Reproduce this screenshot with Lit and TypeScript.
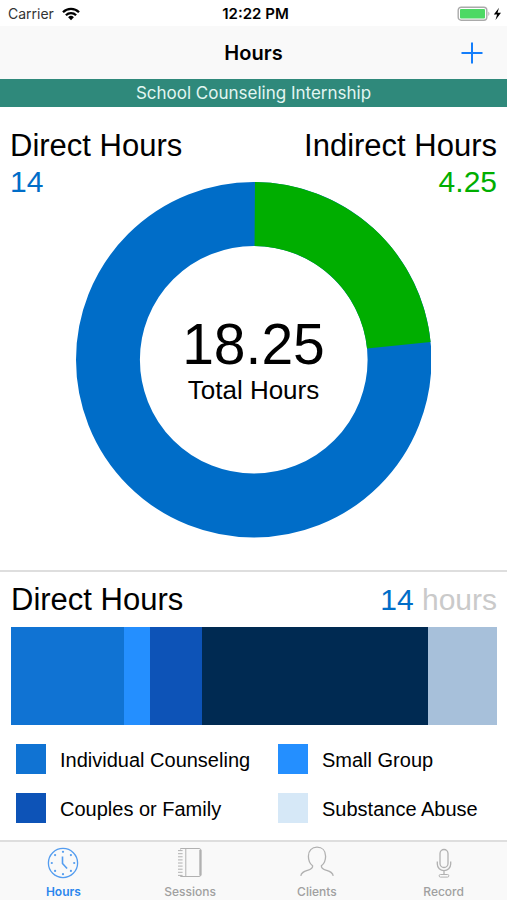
import { LitElement, html, css, svg } from "lit";
import { customElement, state } from "lit/decorators.js";
import { classMap } from "lit/directives/class-map.js";
import { styleMap } from "lit/directives/style-map.js";

const DIRECT = 14;
const INDIRECT = 4.25;

const SEGMENTS = [
  { hours: 3.25, color: "#1073d3" },
  { hours: 0.75, color: "#248fff" },
  { hours: 1.5, color: "#0d53b7" },
  { hours: 6.5, color: "#002a52" },
  { hours: 2, color: "#a7c0da" },
];

const LEGEND = [
  { label: "Individual Counseling", color: "#1073d3" },
  { label: "Small Group", color: "#248fff" },
  { label: "Couples or Family", color: "#0d53b7" },
  { label: "Substance Abuse", color: "#d6e8f7" },
];

const clockDots = Array.from({ length: 8 }, (_, i) => {
  const a = (i * Math.PI) / 4;
  return svg`<circle cx=${17 + 11.2 * Math.sin(a)} cy=${17 - 11.2 * Math.cos(a)} r="1.1" fill="currentColor" stroke="none"></circle>`;
});

const spiral = Array.from(
  { length: 9 },
  (_, i) => svg`<path d="M5 ${4.6 + i * 3.1}h4.6"></path>`
);

const TABS = [
  {
    name: "Hours",
    icon: svg`<circle cx="17" cy="17" r="14.6" stroke-width="1.3"></circle>${clockDots}<path d="M16.5 10.5v7l4.6 5" stroke-width="1.6"></path>`,
  },
  {
    name: "Sessions",
    icon: svg`<path d="M7.5 3.5V2.5H26a2 2 0 0 1 2 2v24a2 2 0 0 1-2 2H7.5v-1M12.8 2.5v28"></path><path d="M27.3 4v25.5" stroke-width="2"></path>${spiral}`,
  },
  {
    name: "Clients",
    icon: svg`<path d="M.8 29.8C1.2 26.4 4 25.5 7.5 24.3 11 23.2 13 22.2 12.6 19.8 9.8 17.6 8.4 14 8.4 10.2 8.4 4.6 11.8 1.2 17 1.2s8.6 3.4 8.6 9c0 3.8-1.4 7.4-4.2 9.6-.4 2.4 1.6 3.4 5.1 4.5 3.5 1.2 6.3 2.1 6.7 5.5" stroke-width="1.3"></path>`,
  },
  {
    name: "Record",
    icon: svg`<rect x="13" y="3.5" width="8" height="18" rx="4" stroke-width="1.3"></rect><path d="M10.3 15.5v2.5a6.7 6.7 0 0 0 13.4 0v-2.5M17 24.7v3.8" stroke-width="1.3"></path><rect x="12.2" y="28.5" width="9.6" height="2.6" rx="1.2"></rect>`,
  },
];

@customElement("app-root")
export class AppRoot extends LitElement {
  @state() private tab = "Hours";

  static styles = css`
    :host {
      display: flex;
      flex-direction: column;
      min-height: 100vh;
      background: #fff;
      color: #000;
      font-family: "Liberation Sans", Arial, sans-serif;
    }
    * {
      box-sizing: border-box;
    }
    h1, h2, p, ul {
      margin: 0;
      padding: 0;
      font-weight: 400;
    }
    h2 {
      font-size: 31px;
    }
    button {
      border: 0;
      padding: 0;
      background: none;
      cursor: pointer;
      font-family: inherit;
    }
    svg {
      display: block;
    }
    .three {
      display: grid;
      grid-template-columns: 1fr auto 1fr;
      align-items: center;
      font-family: Inter, "Open Sans", sans-serif;
    }
    .status {
      height: 26px;
      padding: 2px 4px 0 8px;
      font-size: 14px;
      line-height: 20px;
    }
    .carrier {
      display: flex;
      align-items: center;
      gap: 8px;
      color: #333;
    }
    .clock {
      font-size: 15px;
      font-weight: 600;
    }
    .power {
      justify-self: end;
    }
    .nav {
      height: 53px;
      padding: 0 20px;
      background: #f9f9f9;
    }
    .nav .title {
      grid-column: 2;
      font-size: 20px;
      line-height: 24px;
      font-weight: 600;
    }
    .add {
      justify-self: end;
      color: #147efb;
      padding: 4px;
    }
    .site {
      height: 28px;
      background: #2f897b;
      color: #e2f6f2;
      font-family: Inter, "Open Sans", sans-serif;
      font-size: 17px;
      line-height: 28px;
      text-align: center;
    }
    .overview {
      flex: 1;
      padding: 21px 10px 0;
      border-bottom: 2px solid #dedede;
    }
    .totals,
    .heading {
      display: flex;
      justify-content: space-between;
      font-size: 30px;
      line-height: 36px;
    }
    .totals > :last-child {
      text-align: right;
    }
    .blue {
      color: #006dc8;
    }
    .green {
      color: #00ae00;
    }
    .gray {
      color: #cacaca;
    }
    .chart {
      display: grid;
      place-items: center;
      width: 73%;
      margin: -18px auto 32px;
    }
    .chart > * {
      grid-area: 1 / 1;
    }
    .ring {
      width: 100%;
    }
    .center {
      text-align: center;
    }
    .sum {
      font-size: 57px;
      line-height: 60px;
    }
    .caption {
      font-size: 26px;
      line-height: 32px;
    }
    .breakdown {
      padding: 10px 10px 15px 11px;
    }
    .bar {
      display: flex;
      height: 98px;
      margin: 9px 0 19px;
    }
    .legend {
      display: grid;
      grid-template-columns: 262px 1fr;
      row-gap: 17px;
      padding-left: 5px;
      list-style: none;
      font-size: 20px;
      line-height: 32px;
    }
    .legend li {
      display: flex;
      gap: 14px;
      white-space: nowrap;
    }
    .swatch {
      width: 30px;
      height: 30px;
    }
    .tabs {
      display: grid;
      grid-template-columns: repeat(4, 1fr);
      height: 61px;
      border-top: 2px solid #dedede;
      background: #f9f9f9;
    }
    .tab {
      display: flex;
      flex-direction: column;
      align-items: center;
      gap: 4px;
      padding-top: 4px;
      color: #a0a0a0;
      font-family: Inter, "Open Sans", sans-serif;
      font-size: 12px;
      line-height: 16px;
      font-weight: 500;
    }
    .tab svg {
      opacity: 0.8;
    }
    .active {
      color: #2a86ee;
      font-weight: 600;
    }
  `;

  private ring() {
    const total = DIRECT + INDIRECT;
    const r = 146;
    const c = 2 * Math.PI * r;
    return html`<svg class="ring" viewBox="0 0 356 356" fill="none" stroke-width="64" role="img" aria-label="Direct and indirect hours">
      <circle cx="178" cy="178" r=${r} stroke="#006dc8"></circle>
      <circle cx="178" cy="178" r=${r} stroke="#00ae00" stroke-dasharray="${(INDIRECT / total) * c} ${c}" transform="rotate(-89.6 178 178)"></circle>
    </svg>`;
  }

  render() {
    return html`
      <div class="status three">
        <div class="carrier">
          <span>Carrier</span>
          <svg width="18" height="14" viewBox="0 0 18 14" fill="none" stroke="#000" stroke-width="2.3">
            <path d="M1 5.2a11.3 11.3 0 0 1 16 0M3.9 8.2a7.2 7.2 0 0 1 10.2 0"></path>
            <path d="M9 13.2 6.1 10.3a4.1 4.1 0 0 1 5.8 0z" fill="#000" stroke="none"></path>
          </svg>
        </div>
        <span class="clock">12:22 PM</span>
        <svg class="power" width="46" height="16" viewBox="0 0 46 16">
          <rect x="1.2" y="1.2" width="28.6" height="13" rx="3" fill="#fff" stroke="#aaa" stroke-width="1.4"></rect>
          <rect x="3" y="3" width="25" height="9.4" rx="1" fill="#4cd964"></rect>
          <path d="M31.4 5.5a3 3 0 0 1 0 4.5z" fill="#aaa"></path>
          <path d="M42 1.7 36.8 8.6h3.3l-1.6 5.4L44 6.8h-3.5z" fill="#000"></path>
        </svg>
      </div>
      <header class="nav three">
        <h1 class="title">Hours</h1>
        <button class="add" aria-label="Add hours">
          <svg width="22" height="22" viewBox="0 0 22 22" fill="none" stroke="currentColor" stroke-width="2"><path d="M11 .5v21M.5 11h21"></path></svg>
        </button>
      </header>
      <p class="site">School Counseling Internship</p>
      <section class="overview">
        <div class="totals">
          <div><h2>Direct Hours</h2><p class="blue">${DIRECT}</p></div>
          <div><h2>Indirect Hours</h2><p class="green">${INDIRECT}</p></div>
        </div>
        <div class="chart">
          ${this.ring()}
          <div class="center">
            <p class="sum">${DIRECT + INDIRECT}</p>
            <p class="caption">Total Hours</p>
          </div>
        </div>
      </section>
      <section class="breakdown">
        <div class="heading">
          <h2>Direct Hours</h2>
          <p><span class="blue">${DIRECT}</span> <span class="gray">hours</span></p>
        </div>
        <div class="bar">
          ${SEGMENTS.map((s) => html`<div style=${styleMap({ flex: `${s.hours} 0 0`, background: s.color })}></div>`)}
        </div>
        <ul class="legend">
          ${LEGEND.map((l) => html`<li><span class="swatch" style=${styleMap({ background: l.color })}></span>${l.label}</li>`)}
        </ul>
      </section>
      <nav class="tabs">
        ${TABS.map(
          (t) => html`<button class=${classMap({ tab: true, active: t.name === this.tab })} @click=${() => (this.tab = t.name)}>
            <svg width="34" height="34" viewBox="0 0 34 34" fill="none" stroke="currentColor" stroke-width="1">${t.icon}</svg>
            ${t.name}
          </button>`
        )}
      </nav>
    `;
  }
}

declare global {
  interface HTMLElementTagNameMap {
    "app-root": AppRoot;
  }
}
